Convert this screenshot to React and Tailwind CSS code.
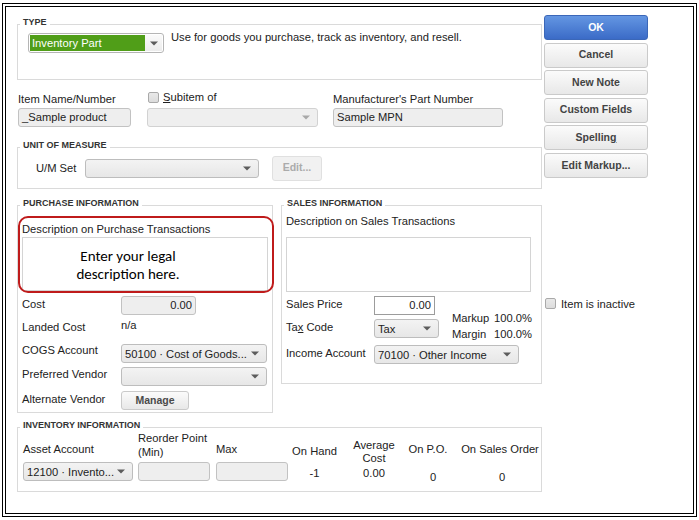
import React from "react";

function Arrow() {
  return (
    <svg width="8" height="5" viewBox="0 0 8 5" className="shrink-0">
      <path d="M0 0.5H8L4 4.5Z" fill="#5c5c5c" />
    </svg>
  );
}

function Select({ className = "", children }) {
  return (
    <div
      className={`flex items-center justify-between rounded-[3px] border border-[#bdbdbd] bg-linear-to-b from-[#f3f3f3] to-[#e7e7e7] pl-[3px] pr-[7px] ${className}`}
    >
      <span className="whitespace-nowrap leading-[14px]">{children}</span>
      <Arrow />
    </div>
  );
}

function Input({ className = "", children }) {
  return (
    <div
      className={`flex items-center rounded-[3px] border border-[#c2c2c2] bg-[#eeeeee] px-[3px] ${className}`}
    >
      {children}
    </div>
  );
}

function Checkbox() {
  return (
    <div className="h-[11px] w-[11px] shrink-0 rounded-[2px] border border-[#a9a9a9] bg-linear-to-b from-[#e9e9e9] to-[#dcdcdc]" />
  );
}

function Group({ label, className = "", children }) {
  return (
    <div className={`relative border border-[#dadada] ${className}`}>
      <span className="absolute left-[2px] top-[-8px] bg-white px-[3px] text-[9px] font-bold leading-[11px] text-[#333]">
        {label}
      </span>
      {children}
    </div>
  );
}

function Button({ children, primary = false }) {
  return (
    <div
      className={
        primary
          ? "flex h-[25px] w-[104px] items-center justify-center rounded-[3px] border border-[#3b67b8] bg-linear-to-b from-[#6496e2] to-[#3b6bc7] text-[10.5px] font-bold text-white"
          : "flex h-[25px] w-[104px] items-center justify-center rounded-[3px] border border-[#cacaca] bg-linear-to-b from-[#fbfbfb] to-[#e8e8e8] text-[10.5px] font-bold text-[#434343]"
      }
    >
      {children}
    </div>
  );
}

export default function App() {
  return (
    <div className="h-[520px] w-[699px] overflow-hidden bg-white font-['Liberation_Sans',Arial,sans-serif] text-[11.2px] text-[#222]">
      <div className="ml-[2px] mt-[3px] flex h-[514px] w-[695px] border-[4px] border-double border-black">
        {/* LEFT COLUMN */}
        <div className="ml-[11px] w-[525px]">
          {/* TYPE */}
          <Group label="TYPE" className="mt-[17px] h-[56px]">
            <div className="flex items-start pl-[10px] pt-[8px]">
              <div className="flex h-[20px] w-[136px] items-center rounded-[3px] border border-[#b5b5b5] bg-white p-[1px]">
                <div className="flex h-full w-[115px] items-center bg-[#509e18] pl-[2px] leading-[14px] text-white">
                  Inventory Part
                </div>
                <div className="flex flex-1 items-center justify-center self-stretch bg-linear-to-b from-[#fafafa] to-[#ececec]">
                  <Arrow />
                </div>
              </div>
              <div className="ml-[7px] mt-[-3px] leading-[14px]">
                Use for goods you purchase, track as inventory, and resell.
              </div>
            </div>
          </Group>

          {/* ITEM NAME ROW */}
          <div className="mt-[12px] flex items-start">
            <div className="ml-[1px] w-[113px]">
              <div className="h-[14px] leading-[14px]">Item Name/Number</div>
              <Input className="mt-[2px] h-[19px]">_Sample product</Input>
            </div>
            <div className="ml-[16px] w-[171px]">
              <div className="flex h-[14px] items-start">
                <div className="ml-[1px]">
                  <Checkbox />
                </div>
                <div className="ml-[4px] mt-[-2px] leading-[14px]">
                  <span className="underline">S</span>ubitem of
                </div>
              </div>
              <div className="mt-[2px] flex h-[19px] items-center justify-end rounded-[3px] border border-[#d2d2d2] bg-[#efefef] pr-[7px]">
                <svg width="8" height="5" viewBox="0 0 8 5">
                  <path d="M0 0.5H8L4 4.5Z" fill="#a8a8a8" />
                </svg>
              </div>
            </div>
            <div className="ml-[15px] w-[170px]">
              <div className="h-[14px] leading-[14px]">Manufacturer's Part Number</div>
              <Input className="mt-[2px] h-[19px]">Sample MPN</Input>
            </div>
          </div>

          {/* UNIT OF MEASURE */}
          <Group label="UNIT OF MEASURE" className="mt-[20px] h-[42px]">
            <div className="flex h-full items-center pl-[18px]">
              <div className="w-[49px] leading-[14px]">U/M Set</div>
              <Select className="h-[19px] w-[174px]" />
              <div className="ml-[13px] flex h-[25px] w-[50px] items-center justify-center rounded-[3px] border border-[#e0e0e0] bg-[#f1f1f1] text-[10.5px] font-bold text-[#ababab]">
                Edit...
              </div>
            </div>
          </Group>

          {/* PURCHASE + SALES */}
          <div className="mt-[16px] flex items-start">
            <Group label="PURCHASE INFORMATION" className="h-[208px] w-[256px]">
              <div className="px-[4px] pt-[16px]">
                <div className="h-[14px] leading-[14px]">Description on Purchase Transactions</div>
                <div className="mt-[1px] h-[54px] w-[246px] border border-[#d4d4d4] bg-white pr-[34px] pt-[9px] text-center font-['Carlito','Lato',sans-serif] text-[15px] leading-[18px] text-black">
                  Enter your legal
                  <br />
                  description here.
                </div>

                <div className="mt-[5px] flex h-[19px] items-start">
                  <div className="mt-[1px] w-[99px] leading-[14px]">Cost</div>
                  <Input className="h-[19px] w-[75px] justify-end">0.00</Input>
                </div>
                <div className="mt-[3px] flex h-[18px] items-start">
                  <div className="mt-[2px] w-[99px] leading-[14px]">Landed Cost</div>
                  <div className="leading-[14px]">n/a</div>
                </div>
                <div className="mt-[8px] flex h-[19px] items-start">
                  <div className="mt-[-1px] w-[99px] leading-[14px]">COGS Account</div>
                  <Select className="h-[19px] w-[146px]">50100 · Cost of Goods...</Select>
                </div>
                <div className="mt-[4px] flex h-[19px] items-start">
                  <div className="w-[99px] leading-[14px]">Preferred Vendor</div>
                  <Select className="h-[19px] w-[146px]" />
                </div>
                <div className="mt-[5px] flex h-[19px] items-start">
                  <div className="mt-[1px] w-[99px] leading-[14px]">Alternate Vendor</div>
                  <div className="flex h-[19px] w-[68px] items-center justify-center rounded-[3px] border border-[#cacaca] bg-linear-to-b from-[#fbfbfb] to-[#e8e8e8] text-[10.5px] font-bold text-[#4a4a4a]">
                    Manage
                  </div>
                </div>
              </div>
              {/* annotation box */}
              <div className="absolute left-[0px] top-[10px] h-[77px] w-[256px] rounded-[10px] border-[2px] border-[#bf1b1b]" />
            </Group>

            <Group label="SALES INFORMATION" className="ml-[8px] h-[179px] w-[261px]">
              <div className="pl-[4px] pt-[8px]">
                <div className="h-[14px] leading-[14px]">Description on Sales Transactions</div>
                <div className="mt-[9px] h-[55px] w-[245px] border border-[#d4d4d4] bg-white" />
                <div className="flex items-start">
                  <div className="w-[153px]">
                    <div className="mt-[4px] flex h-[19px] items-start">
                      <div className="mt-[1px] w-[88px] leading-[14px]">Sales Price</div>
                      <div className="flex h-[19px] w-[61px] items-center justify-end border border-[#9c9c9c] bg-white px-[3px]">
                        0.00
                      </div>
                    </div>
                    <div className="mt-[4px] flex h-[19px] items-start">
                      <div className="mt-[1px] w-[88px] leading-[14px]">
                        Ta<span className="underline">x</span> Code
                      </div>
                      <Select className="h-[19px] w-[65px]">Tax</Select>
                    </div>
                  </div>
                  <div className="ml-[13px] mt-[18px] grid grid-cols-[42px_auto] leading-[16px]">
                    <span>Markup</span>
                    <span>100.0%</span>
                    <span>Margin</span>
                    <span>100.0%</span>
                  </div>
                </div>
                <div className="mt-[3px] flex h-[19px] items-start">
                  <div className="mt-[1px] w-[88px] leading-[14px]">Income Account</div>
                  <Select className="h-[19px] w-[145px]">70100 · Other Income</Select>
                </div>
              </div>
            </Group>
          </div>

          {/* INVENTORY */}
          <Group label="INVENTORY INFORMATION" className="mt-[14px] h-[65px]">
            <div className="flex items-start pl-[5px]">
              <div className="w-[110px]">
                <div className="h-[34px] pt-[14px] leading-[14px]">Asset Account</div>
                <Select className="h-[19px] w-[110px]">12100 · Invento...</Select>
              </div>
              <div className="ml-[5px] w-[72px]">
                <div className="h-[34px] pt-[3px] leading-[14px]">
                  Reorder Point
                  <br />
                  (Min)
                </div>
                <Input className="h-[19px] w-[72px]" />
              </div>
              <div className="ml-[6px] w-[72px]">
                <div className="h-[34px] pt-[14px] leading-[14px]">Max</div>
                <Input className="h-[19px] w-[72px]" />
              </div>
              <div className="w-[53px] text-center">
                <div className="h-[34px] pt-[16px] leading-[14px]">On Hand</div>
                <div className="pt-[4px] leading-[14px]">-1</div>
              </div>
              <div className="w-[66px] text-center">
                <div className="h-[34px] pt-[11px] leading-[13px]">
                  Average
                  <br />
                  Cost
                </div>
                <div className="pt-[4px] leading-[14px]">0.00</div>
              </div>
              <div className="w-[42px] text-center">
                <div className="h-[34px] whitespace-nowrap pt-[14px] leading-[14px]">On P.O.</div>
                <div className="pl-[10px] pt-[8px] leading-[14px]">0</div>
              </div>
              <div className="ml-[12px] w-[78px] text-center">
                <div className="h-[34px] whitespace-nowrap pt-[14px] leading-[14px]">On Sales Order</div>
                <div className="pl-[4px] pt-[8px] leading-[14px]">0</div>
              </div>
            </div>
          </Group>
        </div>

        {/* RIGHT COLUMN */}
        <div className="ml-[2px] mt-[8px] w-[104px]">
          <div className="flex flex-col gap-[2.6px]">
            <Button primary>OK</Button>
            <Button>Cancel</Button>
            <Button>New Note</Button>
            <Button>Custom Fields</Button>
            <Button>
              <span>
                Spellin<span className="underline">g</span>
              </span>
            </Button>
            <Button>Edit Markup...</Button>
          </div>
          <div className="ml-[1px] mt-[119px] flex items-center">
            <Checkbox />
            <span className="ml-[5px] leading-[14px]">Item is inactive</span>
          </div>
        </div>
      </div>
    </div>
  );
}
